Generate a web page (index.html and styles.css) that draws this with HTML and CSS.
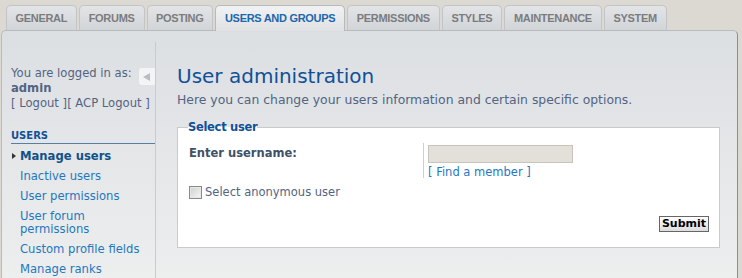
FILE: index.html
```html
<!DOCTYPE html>
<html lang="en">
<head>
    <meta charset="UTF-8">
    <title>User administration</title>
    <link rel="stylesheet" href="styles.css">
</head>
<body>
    <ul class="tabs">
        <li class="tab">GENERAL</li>
        <li class="tab">FORUMS</li>
        <li class="tab">POSTING</li>
        <li class="tab active">USERS AND GROUPS</li>
        <li class="tab">PERMISSIONS</li>
        <li class="tab">STYLES</li>
        <li class="tab">MAINTENANCE</li>
        <li class="tab">SYSTEM</li>
    </ul>
    <div class="panel">
        <div class="sidebar">
            <div class="login">
                <span class="toggle"><svg width="10" height="10" viewBox="0 0 10 10"><path d="M1 5 L8 1 L8 9 Z" fill="#b9bcc0"/></svg></span>
                You are logged in as:<br>
                <b>admin</b><br>
                <a href="#">[ Logout ]</a><a href="#">[ ACP Logout ]</a>
            </div>
            <div class="menu-head">USERS</div>
            <ul class="menu">
                <li class="current"><a href="#">Manage users</a></li>
                <li><a href="#">Inactive users</a></li>
                <li><a href="#">User permissions</a></li>
                <li><a href="#">User forum permissions</a></li>
                <li><a href="#">Custom profile fields</a></li>
                <li><a href="#">Manage ranks</a></li>
            </ul>
        </div>
        <div class="main">
            <h1>User administration</h1>
            <p class="intro">Here you can change your users information and certain specific options.</p>
            <fieldset class="box">
                <legend>Select user</legend>
                <div class="row">
                    <label class="label">Enter username:</label>
                    <div class="field">
                        <input type="text" class="text">
                        <a href="#">[ Find a member ]</a>
                    </div>
                </div>
                <label class="anon"><input type="checkbox"> Select anonymous user</label>
                <div class="actions"><button class="submit">Submit</button></div>
            </fieldset>
        </div>
    </div>
</body>
</html>
```
FILE: styles.css
```css
body {
    margin: 0;
    background: #dcd9d2;
    font-family: "DejaVu Sans", Verdana, sans-serif;
    font-size: 11.6px;
    color: #536482;
}
a {
    color: #1f78be;
    text-decoration: none;
}
.tabs {
    list-style: none;
    margin: 0;
    padding: 5px 0 0 6px;
    display: flex;
    gap: 2px;
    height: 25px;
}
.tab {
    font-family: "Liberation Sans", Arial, sans-serif;
    font-weight: bold;
    font-size: 11px;
    letter-spacing: -0.3px;
    color: #7b7c7e;
    padding: 0 9px 0 8.5px;
    line-height: 25px;
    height: 24px;
    border: 1px solid #c3c4c6;
    border-bottom: none;
    border-radius: 5px 5px 0 0;
    background: linear-gradient(#e2e4e6, #d2d5d8);
}
.tab.active {
    color: #2067aa;
    height: 25px;
    position: relative;
    z-index: 1;
    background: linear-gradient(#f1f2f3, #dfe1e4);
    border-color: #b7b9bc;
}
.panel {
    margin: 0 4px 0 1px;
    border: 1px solid #b9bbbe;
    border-bottom: none;
    border-right-color: #8e8e8e;
    border-radius: 5px 5px 0 0;
    background: linear-gradient(#dcdfe2 0, #e4e6e8 120px, #edeeee 248px);
    display: flex;
    height: 248px;
}
.sidebar {
    width: 144px;
    padding: 24px 0 0 9px;
    margin-top: 11px;
    border-right: 1px solid #c9cbce;
    flex: none;
}
.login {
    position: relative;
    line-height: 15px;
}
.login b {
    color: #536482;
}
.login a {
    color: #536482;
}
.toggle {
    position: absolute;
    right: 0;
    top: 2px;
    width: 16px;
    height: 17px;
    background: #f3f4f5;
    border-radius: 3px 0 0 3px;
    display: flex;
    align-items: center;
    justify-content: center;
}
.menu-head {
    margin-top: 19px;
    font-weight: bold;
    font-size: 10px;
    line-height: 12px;
    color: #115098;
    padding-bottom: 1px;
    border-bottom: 1px solid #557fa8;
}
.menu {
    list-style: none;
    margin: 0;
    padding: 2px 0 0 0;
}
.menu li {
    padding: 3.5px 0 3.5px 9px;
    line-height: 13px;
}
.menu li.current {
    position: relative;
}
.menu li.current::before {
    content: "";
    position: absolute;
    left: 1px;
    top: 7px;
    border-left: 4px solid #333;
    border-top: 3px solid transparent;
    border-bottom: 3px solid transparent;
}
.menu li.current a {
    font-weight: bold;
    color: #105289;
}
.main {
    flex: 1;
    padding: 32px 17px 0 21px;
}
h1 {
    font-family: "DejaVu Sans", Verdana, sans-serif;
    font-weight: normal;
    font-size: 20px;
    color: #115098;
    margin: 0;
    line-height: 26px;
}
.intro {
    margin: 3px 0 12px 0;
    line-height: 16px;
    font-size: 12.4px;
}
.box {
    margin: 0;
    padding: 9px 10px 15px 11px;
    background: #fff;
    border: 1px solid #cacaca;
    font-size: 11.5px;
}
.box legend {
    font-weight: bold;
    font-size: 11.5px;
    letter-spacing: -0.3px;
    color: #115098;
    padding: 0;
    margin-left: -1px;
}
.row {
    display: flex;
}
.label {
    width: 234px;
    font-weight: bold;
    color: #425067;
    padding-top: 3px;
    line-height: 14px;
    border-right: 1px solid #d0d0d0;
    height: 32px;
}
.field {
    padding: 2px 0 0 4px;
    display: flex;
    flex-direction: column;
    gap: 2px;
    line-height: 14px;
}
.text {
    width: 145px;
    height: 18px;
    box-sizing: border-box;
    margin: 0;
    padding: 0;
    border: 1px solid #c9c4bb;
    background: #e3dfd9;
}
.anon {
    display: flex;
    align-items: center;
    gap: 3px;
    margin-top: 6px;
    line-height: 14px;
}
.anon input {
    appearance: none;
    margin: 0;
    width: 13px;
    height: 13px;
    border: 1px solid #8a8a8a;
    background: linear-gradient(135deg, #cfcfcf, #f6f6f6);
    box-shadow: inset 0 0 0 1px #e8e8e8;
}
.actions {
    text-align: right;
    margin-top: 17px;
}
.submit {
    font-family: "DejaVu Sans", Verdana, sans-serif;
    font-weight: bold;
    font-size: 11px;
    line-height: 14px;
    color: #000;
    padding: 0 2px;
    border: 1px solid #666;
    background: linear-gradient(#fff, #dcdcdc);
    border-radius: 0;
}
```
